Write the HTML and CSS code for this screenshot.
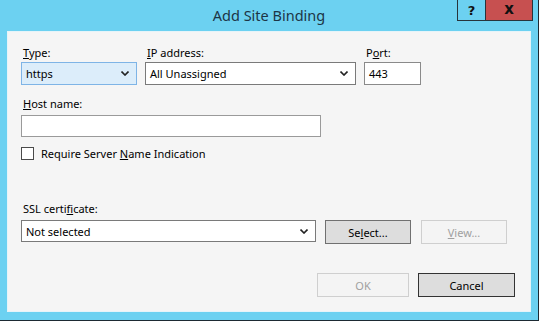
FILE: index.html
```html
<!DOCTYPE html>
<html lang="en">
<head>
  <meta charset="UTF-8" />
  <title>Add Site Binding</title>
  <link rel="stylesheet" href="styles.css">
</head>
<body>
  <div class="window">
    <div class="titlebar">
      <div></div>
      <div class="title">Add Site Binding</div>
      <div class="caption-btns">
        <div class="cap-btn help">?</div>
        <div class="cap-btn close">x</div>
      </div>
    </div>

    <div class="panel">
      <div class="row-top">
        <div class="field">
          <label><u>T</u>ype:</label>
          <div class="combo focused"><span>https</span>
            <svg width="8" height="5" viewBox="0 0 8 5"><polyline points="0.5,0.5 4,4 7.5,0.5" fill="none" stroke="#222" stroke-width="1.6"/></svg>
          </div>
        </div>
        <div class="field">
          <label><u>I</u>P address:</label>
          <div class="combo"><span>All Unassigned</span>
            <svg width="8" height="5" viewBox="0 0 8 5"><polyline points="0.5,0.5 4,4 7.5,0.5" fill="none" stroke="#222" stroke-width="1.6"/></svg>
          </div>
        </div>
        <div class="field">
          <label>P<u>o</u>rt:</label>
          <div class="textbox">443</div>
        </div>
      </div>

      <div class="field host">
        <label><u>H</u>ost name:</label>
        <div class="textbox wide"></div>
      </div>

      <div class="check-row">
        <span class="checkbox"></span>
        <span>Require Server <u>N</u>ame Indication</span>
      </div>

      <div class="field ssl">
        <label>SSL certi<u>f</u>icate:</label>
        <div class="ssl-row">
          <div class="combo cert"><span>Not selected</span>
            <svg width="8" height="5" viewBox="0 0 8 5"><polyline points="0.5,0.5 4,4 7.5,0.5" fill="none" stroke="#222" stroke-width="1.6"/></svg>
          </div>
          <div class="btn">Se<u>l</u>ect...</div>
          <div class="btn disabled"><u>V</u>iew...</div>
        </div>
      </div>

      <div class="footer">
        <div class="btn wide-btn disabled">OK</div>
        <div class="btn wide-btn default">Cancel</div>
      </div>
    </div>
  </div>
</body>
</html>
```

FILE: styles.css
```css
body { margin: 0; background: #fff; font-family: "Noto Sans", sans-serif; font-size: 11px; color: #000; }
.window { width: 538px; height: 320px; background: #6cd1f1; border-right: 1px solid #1d2a33; border-bottom: 1px solid #1d2a33; }

.titlebar { display: grid; grid-template-columns: 1fr auto 1fr; height: 31px; }
.title { font-size: 14.5px; color: #1c3546; line-height: 31px; }
.caption-btns { display: flex; justify-self: end; align-self: start; margin-right: 5px; }
.cap-btn { height: 20px; border: 1px solid #27343c; border-top: none; display: flex; align-items: center; justify-content: center; font-family: "DejaVu Sans", sans-serif; font-weight: bold; color: #111; }
.help { width: 27px; font-size: 13px; border-right: none; }
.close { width: 48px; background: #c75050; font-size: 15px; padding-bottom: 2px; box-sizing: border-box; height: 21px; }

.panel { margin-left: 7px; background: #f5f5f5; border: 1px solid #e6f4f9; padding: 0 0 0 13px; box-sizing: border-box; width: 524px; height: 281px; }

label { display: block; line-height: 15px; padding-left: 2px; margin-bottom: 2px; }
.row-top { display: grid; grid-template-columns: 116px 211px 57px; column-gap: 8px; padding-top: 13px; }

.combo { height: 23px; box-sizing: border-box; border: 1px solid #7a7a7a; background: #fff; display: flex; align-items: center; padding: 0 7px 0 4px; }
.combo span { flex: 1; }
.combo.focused { background: #dcedfa; border-color: #7eb4e6; }
.textbox { height: 23px; box-sizing: border-box; border: 1px solid #8a8a8a; background: #fff; padding: 3px 4px 0; line-height: 15px; }

.host { margin-top: 11px; }
.host label { margin-bottom: 4px; }
.textbox.wide { width: 300px; height: 22px; border-color: #9a9a9a; }

.check-row { display: flex; align-items: center; gap: 7px; margin-top: 9px; line-height: 15px; }
.checkbox { width: 13px; height: 13px; box-sizing: border-box; border: 1px solid #4a4a4a; background: #fff; }

.ssl { margin-top: 40px; }
.ssl label { margin-bottom: 4px; }
.ssl-row { display: flex; align-items: flex-start; }
.combo.cert { width: 295px; height: 22px; }
.btn { box-sizing: border-box; width: 86px; height: 24px; margin-left: 9px; border: 1px solid #707070; background: #dddddd; display: flex; align-items: center; justify-content: center; }
.ssl-row .btn.disabled { margin-left: 10px; }
.btn.disabled { background: #f4f4f4; border-color: #cfcfcf; color: #a0a0a0; }

.footer { display: flex; justify-content: flex-end; gap: 9px; margin-top: 29px; padding-right: 15px; }
.wide-btn { width: 92px; margin-left: 0; }
.wide-btn.default { width: 97px; border-color: #333; }
```
